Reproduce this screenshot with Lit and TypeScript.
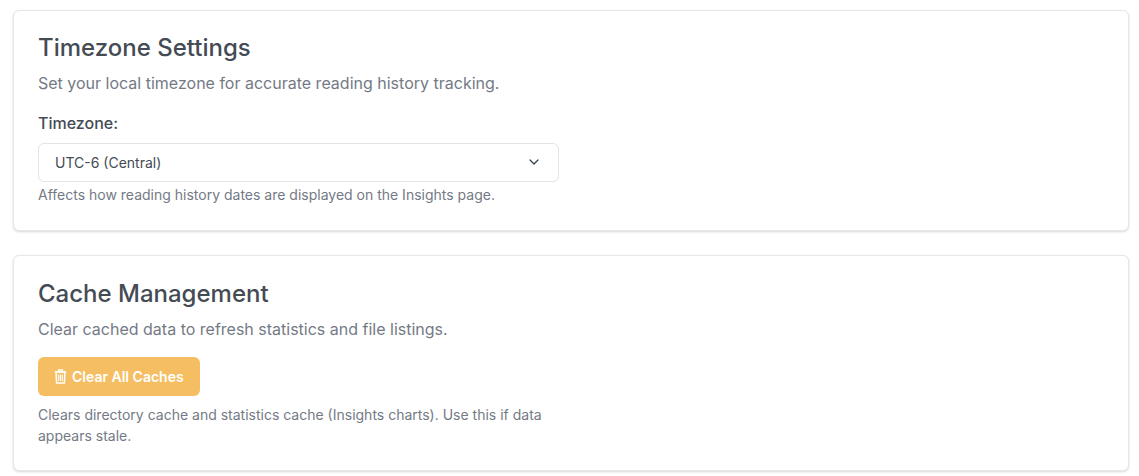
import { LitElement, html, css } from "lit";
import { customElement } from "lit/decorators.js";

@customElement("app-root")
export class AppRoot extends LitElement {
  static styles = css`
    :host {
      display: block;
      font-family: Inter, "Liberation Sans", sans-serif;
      background: #fff;
      color: #444b54;
    }
    .page {
      display: flex;
      flex-direction: column;
      gap: 24px;
      padding: 9.6px 10px 5px 13px;
    }
    .card {
      background: #fff;
      border: 1px solid #e5e7eb;
      border-radius: 6px;
      box-shadow: 0 1px 3px rgba(0, 0, 0, 0.1), 0 1px 2px rgba(0, 0, 0, 0.06);
      padding: 23.7px 24px 25px;
    }
    .card + .card {
      padding-bottom: 24px;
    }
    h2 {
      margin: 0 0 8.5px;
      font-size: 24px;
      line-height: 28px;
      font-weight: 500;
      color: #444b54;
    }
    .desc {
      margin: 0 0 16px;
      font-size: 16px;
      line-height: 24px;
      color: #747a85;
    }
    label {
      display: block;
      margin-bottom: 8px;
      font-size: 16px;
      line-height: 24px;
      font-weight: 500;
      color: #444b54;
    }
    .field {
      width: 521px;
    }
    .select {
      box-sizing: border-box;
      height: 39px;
      display: flex;
      align-items: center;
      justify-content: space-between;
      padding: 0 16px;
      border: 1px solid #e2e4e9;
      border-radius: 6px;
      background: #fff;
      font-size: 14px;
      color: #444b54;
    }
    .select svg {
      width: 16px;
      height: 16px;
    }
    .hint {
      margin: 2.6px 0 0;
      font-size: 14px;
      line-height: 21px;
      color: #747a85;
    }
    .btn {
      display: inline-flex;
      align-items: center;
      gap: 5px;
      height: 39px;
      box-sizing: border-box;
      padding: 0 16px;
      border: 0;
      border-radius: 6px;
      background: #f5be63;
      color: #fff;
      font: 600 14px Inter, "Liberation Sans", sans-serif;
    }
    .btn svg {
      width: 13px;
      height: 15px;
    }
    .btn + .hint {
      margin-top: 8px;
    }
  `;

  render() {
    return html`
      <div class="page">
        <section class="card">
          <h2>Timezone Settings</h2>
          <p class="desc">Set your local timezone for accurate reading history tracking.</p>
          <div class="field">
            <label>Timezone:</label>
            <div class="select">
              <span>UTC-6 (Central)</span>
              <svg viewBox="0 0 20 20" fill="none" stroke="#374151" stroke-width="1.6" stroke-linecap="round" stroke-linejoin="round">
                <path d="M5 7.5l5 5 5-5" />
              </svg>
            </div>
            <p class="hint">Affects how reading history dates are displayed on the Insights page.</p>
          </div>
        </section>
        <section class="card">
          <h2>Cache Management</h2>
          <p class="desc">Clear cached data to refresh statistics and file listings.</p>
          <div class="field">
            <button class="btn">
              <svg viewBox="0 0 13 15" fill="none" stroke="#fff" stroke-width="1.5">
                <path d="M0.8 3h11.4" stroke-width="1.8" />
                <path d="M4.5 2.6V1h4v1.6" stroke-width="1.3" />
                <path d="M2.1 3.5l.5 10.6h7.8l.5-10.6" />
                <path d="M4.7 5.5v6.5M6.5 5.5v6.5M8.3 5.5v6.5" stroke-width="1.1" />
              </svg>
              Clear All Caches
            </button>
            <p class="hint">Clears directory cache and statistics cache (Insights charts). Use this if data appears stale.</p>
          </div>
        </section>
      </div>
    `;
  }
}
